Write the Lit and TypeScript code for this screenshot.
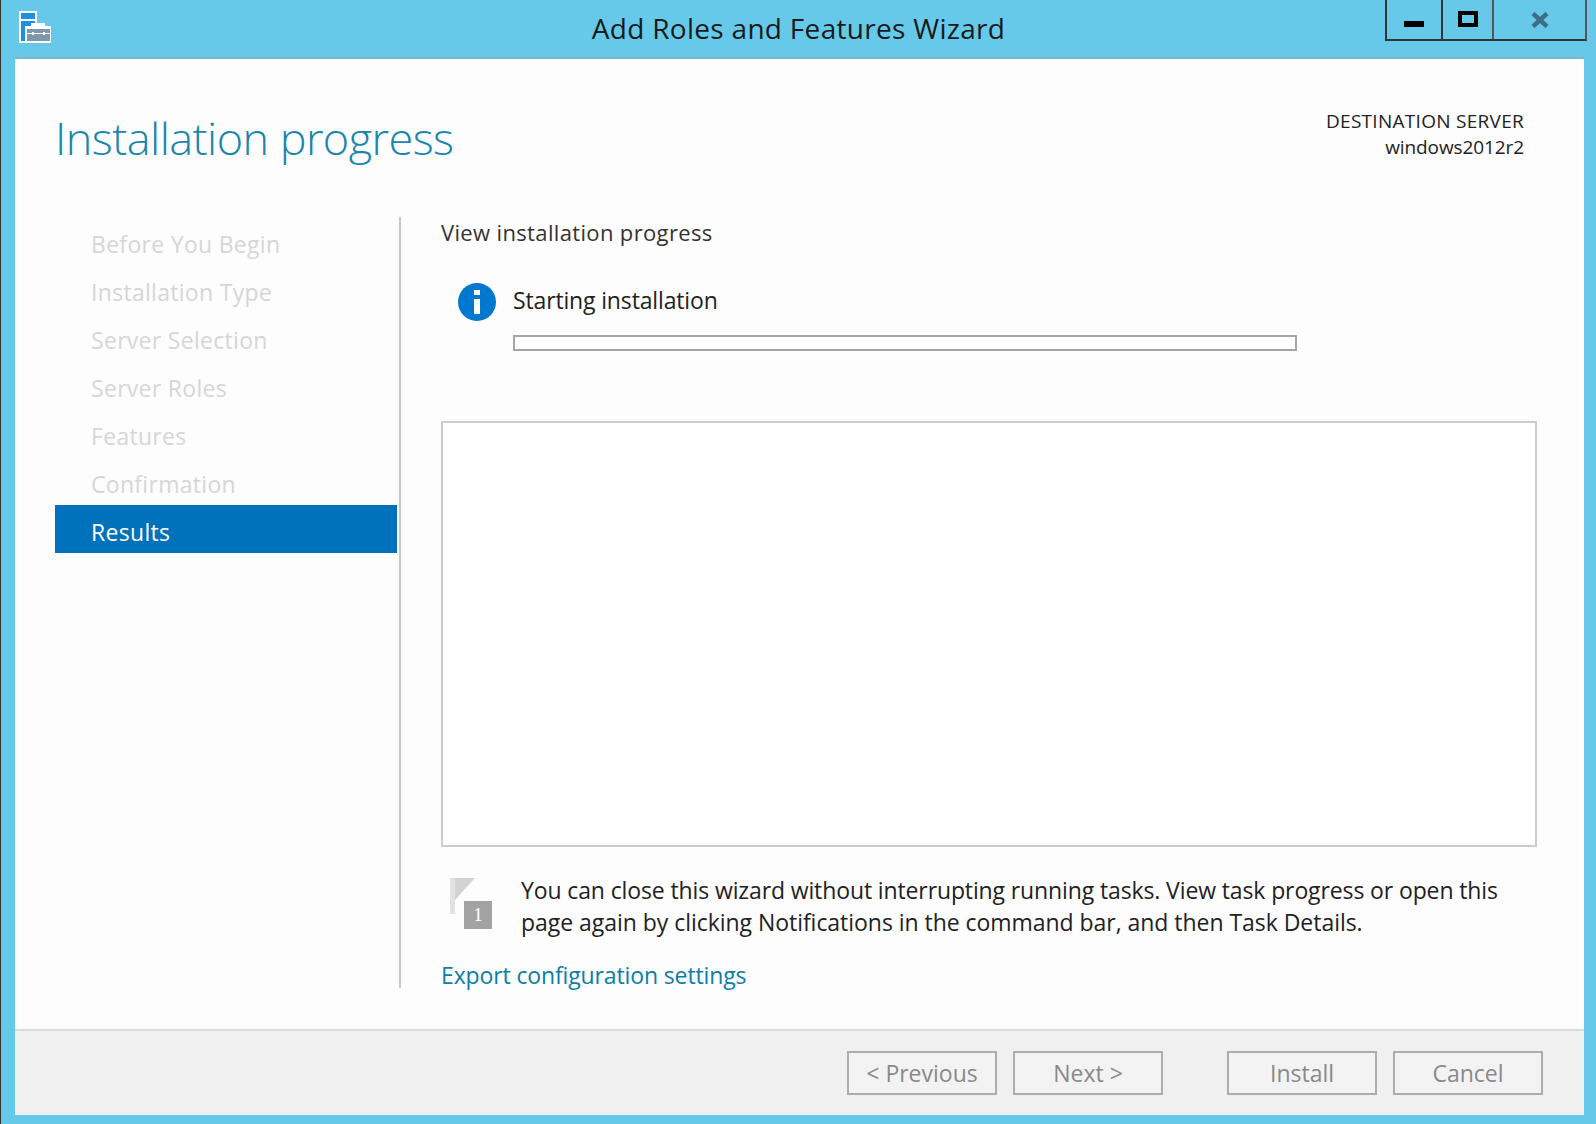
import { LitElement, html, css } from "lit";
import { customElement } from "lit/decorators.js";

const STEPS = ["Before You Begin", "Installation Type", "Server Selection", "Server Roles", "Features", "Confirmation"];

@customElement("app-root")
export class AppRoot extends LitElement {
  static styles = css`
    :host { display: block; width: 1596px; height: 1124px; overflow: hidden; font-family: "Open Sans", "Noto Sans", sans-serif; }
    * { box-sizing: border-box; }
    .frame { width: 1596px; height: 1124px; background: #66c9ea; border-left: 1px solid #333; display: flex; flex-direction: column; }
    .titlebar { height: 57px; flex: none; display: grid; grid-template-columns: 1fr auto 1fr; align-items: start; }
    .appicon { display: block; margin: 11px 0 0 18px; }
    .title { font-size: 28px; line-height: 56px; color: #1a1a1a; letter-spacing: 0.3px; }
    .controls { justify-self: end; display: flex; margin-right: 9px; height: 41px; border: 2px solid #333; border-top: 0; border-right-color: #555; }
    .ctl { display: flex; align-items: center; justify-content: center; }
    .ctl.min { width: 56px; border-right: 2px solid #333; }
    .ctl.min svg { margin-top: 8px; }
    .ctl.max { width: 51px; border-right: 2px solid #555; }
    .ctl.max svg { margin-top: -2px; }
    .ctl.close { width: 91px; }
    .client { flex: 1; margin: 0 12px 9px 14px; background: #fdfdfd; border-top: 2px solid #7fb6d2; display: flex; flex-direction: column; min-height: 0; }
    .head { height: 158px; flex: none; display: flex; justify-content: space-between; padding: 46px 60px 0 40px; }
    h1 { margin: 0; font-size: 45px; font-weight: 300; line-height: 66px; color: #1a85ad; letter-spacing: -0.55px; }
    .dest { text-align: right; font-size: 19px; line-height: 26px; color: #222; padding-top: 3px; }
    .dest-a { display: block; letter-spacing: 0.28px; }
    .dest-b { display: block; letter-spacing: -0.1px; }
    .main { height: 771px; flex: none; display: flex; padding-left: 40px; margin-bottom: 41px; }
    .nav { width: 342px; flex: none; }
    .step { height: 48px; line-height: 55px; padding-left: 36px; font-size: 23px; color: #d6d6d6; letter-spacing: 0.3px; }
    .step.on { background: #0072bc; color: #fff; }
    .content { flex: 1; margin-left: 2px; border-left: 2px solid #c8c8c8; padding-left: 40px; padding-right: 47px; display: flex; flex-direction: column; }
    .sub { font-size: 22px; line-height: 32px; color: #333; letter-spacing: 0.35px; margin-top: -1px; }
    .status { display: flex; gap: 17px; margin: 35px 0 0 17px; height: 134px; flex: none; }
    .status svg { flex: none; }
    .status-body { display: flex; flex-direction: column; width: 784px; }
    .status-text { font-size: 23px; line-height: 32px; color: #222; letter-spacing: -0.15px; margin-top: 1px; }
    .bar { height: 16px; border: 2px solid #a5a5a5; background: #fff; margin-top: 19px; }
    .log { height: 426px; flex: none; background: #fff; border: 2px solid #ccc; margin-top: 4px; }
    .note { display: flex; margin-top: 28px; flex: none; }
    .note svg { flex: none; margin: 3px 0 0 8px; }
    .note p { margin: -1px 0 0 26px; font-size: 23px; line-height: 32px; color: #222; letter-spacing: -0.12px; }
    .line2 { letter-spacing: -0.04px; }
    .link { margin-top: 21px; font-size: 23px; line-height: 32px; color: #0c7ea6; letter-spacing: -0.13px; flex: none; }
    .foot { flex: 1; background: #f0f0f0; border-top: 2px solid #dcdcdc; display: flex; align-items: flex-start; padding: 20px 41px 0 0; justify-content: flex-end; }
    .btn { width: 150px; height: 44px; border: 2px solid #adadad; background: #f3f3f3; color: #8a8a8a; font-size: 23px; line-height: 41px; text-align: center; letter-spacing: 0; }
    .btn + .btn { margin-left: 16px; }
    .btn.gap { margin-left: 64px; }
  `;

  render() {
    return html`
      <div class="frame">
        <div class="titlebar">
          <svg class="appicon" width="33" height="33" viewBox="0 0 33 33">
            <rect x="0" y="0" width="18" height="32" fill="#fff"/>
            <rect x="2" y="2" width="14" height="28" fill="#1f8fe0"/>
            <rect x="2" y="8" width="14" height="2" fill="#fff"/>
            <rect x="6" y="15" width="26" height="17" fill="#fff"/>
            <rect x="12" y="12" width="14" height="4" fill="#fff"/>
            <rect x="8" y="18" width="23" height="12" fill="#7d98ad"/>
            <rect x="8" y="22" width="23" height="1" fill="#fff"/>
            <rect x="13" y="21" width="2" height="3" fill="#fff"/>
            <rect x="24" y="21" width="2" height="3" fill="#fff"/>
          </svg>
          <div class="title">Add Roles and Features Wizard</div>
          <div class="controls">
            <div class="ctl min"><svg width="20" height="6"><rect width="20" height="6" fill="#000"/></svg></div>
            <div class="ctl max"><svg width="20" height="16"><rect x="2" y="2" width="16" height="12" fill="none" stroke="#000" stroke-width="4"/></svg></div>
            <div class="ctl close"><svg width="18" height="16"><path d="M2 1.5 16 14.5M16 1.5 2 14.5" stroke="#3a6f85" stroke-width="4.5" fill="none"/></svg></div>
          </div>
        </div>
        <div class="client">
          <div class="head">
            <h1>Installation progress</h1>
            <div class="dest"><span class="dest-a">DESTINATION SERVER</span><span class="dest-b">windows2012r2</span></div>
          </div>
          <div class="main">
            <div class="nav">
              ${STEPS.map((s) => html`<div class="step">${s}</div>`)}
              <div class="step on">Results</div>
            </div>
            <div class="content">
              <div class="sub">View installation progress</div>
              <div class="status">
                <svg width="38" height="38" viewBox="0 0 38 38">
                  <circle cx="19" cy="19" r="19" fill="#0078d0"/>
                  <rect x="16" y="16" width="6" height="15" fill="#fff"/>
                  <rect x="16" y="7" width="6" height="5" fill="#fff"/>
                </svg>
                <div class="status-body">
                  <div class="status-text">Starting installation</div>
                  <div class="bar"></div>
                </div>
              </div>
              <div class="log"></div>
              <div class="note">
                <svg width="46" height="52" viewBox="0 0 46 52">
                  <rect x="1" y="0" width="5" height="36" fill="#e2e2e2"/>
                  <path d="M6 0H26L6 22Z" fill="#d2d2d2"/>
                  <rect x="15" y="23" width="28" height="28" fill="#a3a3a3"/>
                  <text x="29" y="43" font-size="19" font-family="Liberation Serif" fill="#fff" text-anchor="middle">1</text>
                </svg>
                <p>You can close this wizard without interrupting running tasks. View task progress or open this<br/><span class="line2">page again by clicking Notifications in the command bar, and then Task Details.</span></p>
              </div>
              <div class="link">Export configuration settings</div>
            </div>
          </div>
          <div class="foot">
            <div class="btn">&lt; Previous</div>
            <div class="btn">Next &gt;</div>
            <div class="btn gap">Install</div>
            <div class="btn">Cancel</div>
          </div>
        </div>
      </div>
    `;
  }
}
